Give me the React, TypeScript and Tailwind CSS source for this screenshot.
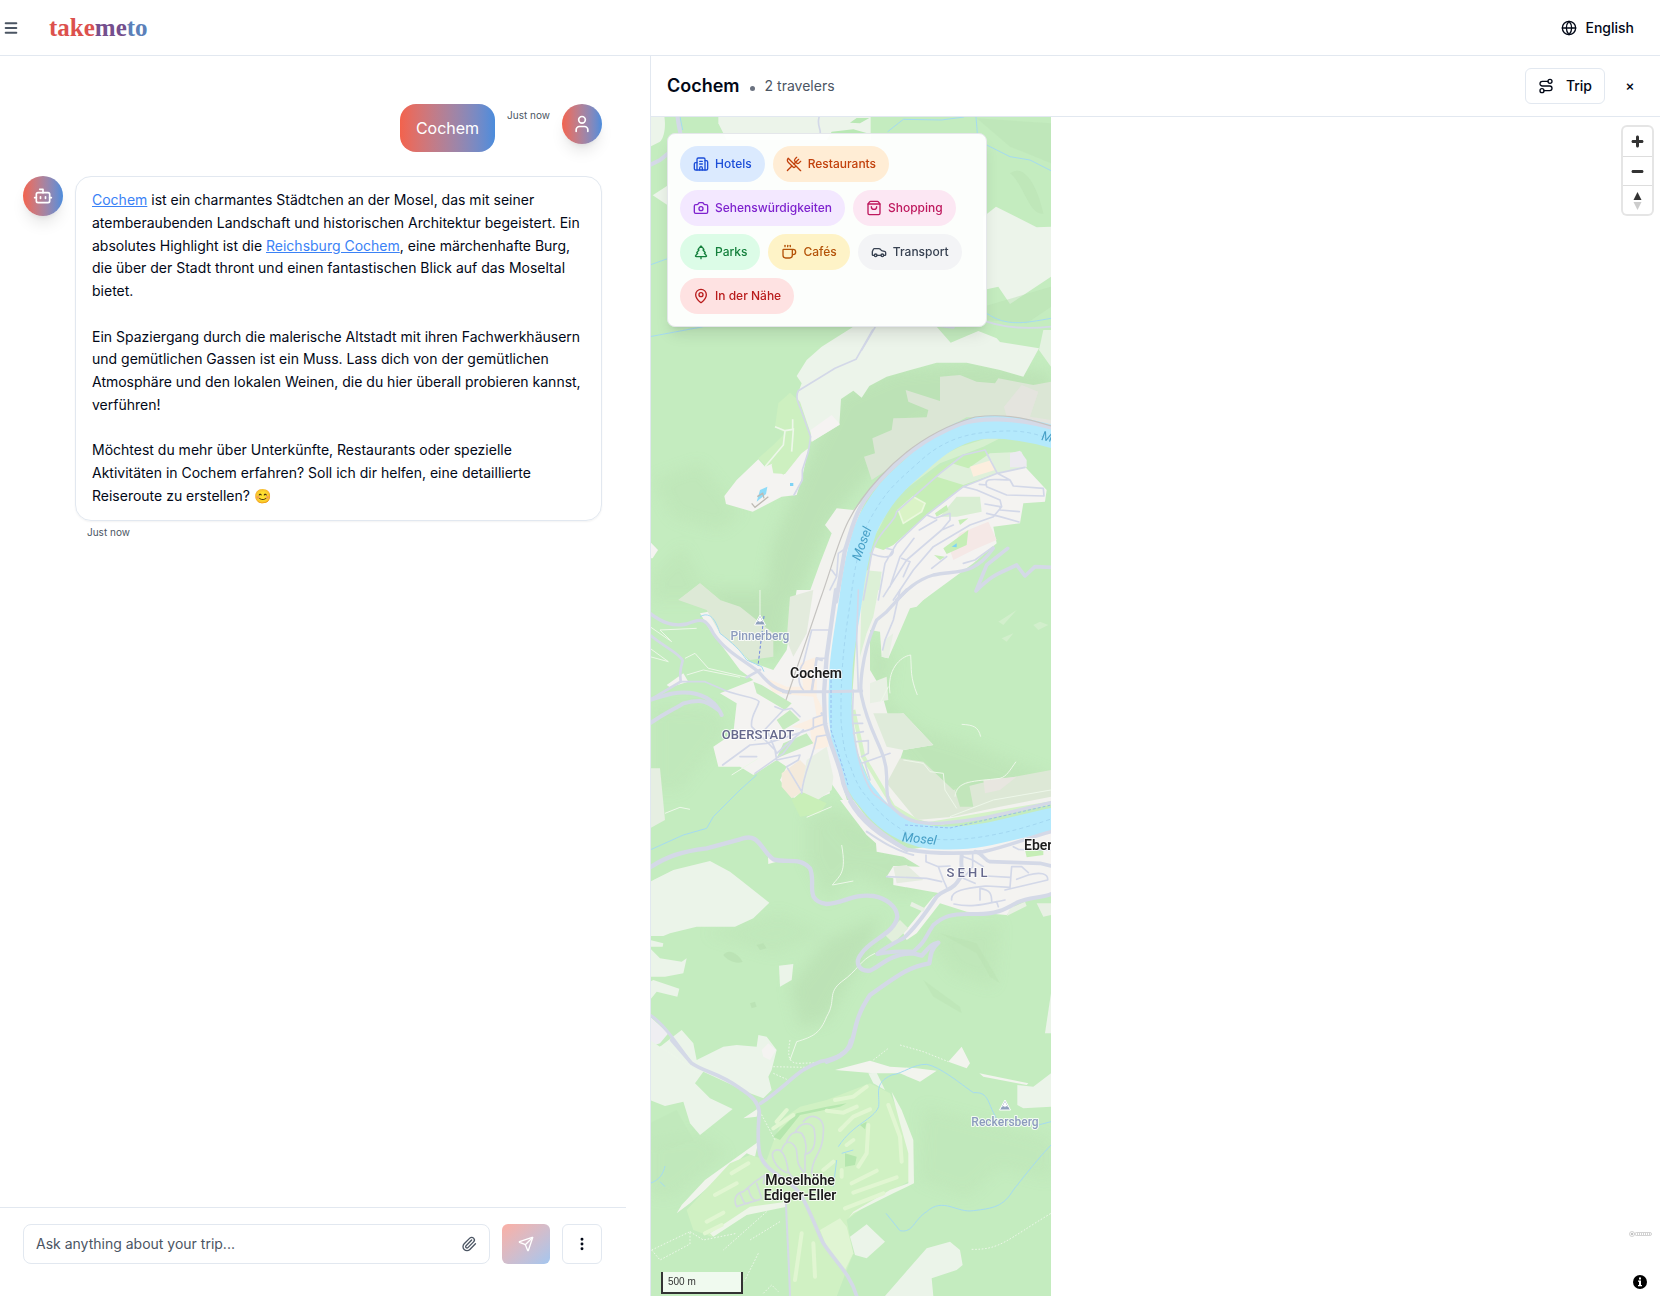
import type { ReactNode } from "react";
import {
  Bot,
  Building2,
  Camera,
  Car,
  Coffee,
  EllipsisVertical,
  Globe,
  MapPin,
  Menu,
  Paperclip,
  Route,
  Send,
  ShoppingBag,
  TreePine,
  User,
  UtensilsCrossed,
  type LucideIcon,
} from "lucide-react";

function Header() {
  return (
    <header className="flex h-14 shrink-0 items-center justify-between border-b border-slate-200 pl-[3px] pr-[26px]">
      <div className="flex items-center gap-[30px]">
        <button type="button" aria-label="Menu" className="text-[#4b5563]">
          <Menu className="size-4" strokeWidth={3} />
        </button>
        <a
          href="#"
          className="font-['Liberation_Serif',serif] text-[25px] leading-7 font-bold"
        >
          <span className="text-[#dc514d]">take</span>
          <span className="text-[#754f8d]">me</span>
          <span className="text-[#5b80b9]">to</span>
        </a>
      </div>
      <button type="button" className="flex items-center gap-2 text-sm font-medium">
        <Globe className="size-4" />
        English
      </button>
    </header>
  );
}

function Avatar({ icon: Icon }: { icon: LucideIcon }) {
  return (
    <div className="flex size-10 shrink-0 items-center justify-center rounded-full bg-linear-to-r from-[#f3624c] to-[#4a8cdc] text-white shadow-lg">
      <Icon className="size-5" />
    </div>
  );
}

function PlaceLink({ children }: { children: ReactNode }) {
  return (
    <a href="#" className="text-[#3b82f6] underline">
      {children}
    </a>
  );
}

function Conversation() {
  return (
    <div className="flex flex-1 flex-col gap-6 overflow-hidden pt-12 pr-12 pl-[23px]">
      <div className="flex items-start justify-end gap-3">
        <p className="rounded-2xl bg-linear-to-r from-[#f3624c] to-[#4a8cdc] px-4 py-3 text-base text-white">
          Cochem
        </p>
        <span className="pt-1 text-[10px] leading-[15px] text-[#4b5563]">Just now</span>
        <Avatar icon={User} />
      </div>
      <div className="flex items-start gap-3">
        <Avatar icon={Bot} />
        <div className="flex-1">
          <div className="rounded-2xl border border-slate-200 px-4 py-3 text-sm leading-relaxed shadow-xs">
            <p>
              <PlaceLink>Cochem</PlaceLink> ist ein charmantes Städtchen an der Mosel, das mit
              seiner atemberaubenden Landschaft und historischen Architektur begeistert. Ein
              absolutes Highlight ist die <PlaceLink>Reichsburg Cochem</PlaceLink>, eine
              märchenhafte Burg, die über der Stadt thront und einen fantastischen Blick auf das
              Moseltal bietet.
            </p>
            <br />
            <p>
              Ein Spaziergang durch die malerische Altstadt mit ihren Fachwerkhäusern und
              gemütlichen Gassen ist ein Muss. Lass dich von der gemütlichen Atmosphäre und den
              lokalen Weinen, die du hier überall probieren kannst, verführen!
            </p>
            <br />
            <p>
              Möchtest du mehr über Unterkünfte, Restaurants oder spezielle Aktivitäten in Cochem
              erfahren? Soll ich dir helfen, eine detaillierte Reiseroute zu erstellen? 😊
            </p>
          </div>
          <p className="mt-1 px-3 text-[10px] leading-[15px] text-[#4b5563]">Just now</p>
        </div>
      </div>
    </div>
  );
}

function Composer() {
  return (
    <form className="mr-6 flex shrink-0 items-center gap-3 border-t border-slate-200 pt-4 pr-6 pb-8 pl-[23px]">
      <div className="flex h-10 min-w-0 flex-1 items-center rounded-lg border border-slate-200 px-3">
        <input
          type="text"
          aria-label="Message"
          placeholder="Ask anything about your trip..."
          className="min-w-0 flex-1 text-sm outline-none placeholder:text-[#4b5563]"
        />
        <button type="button" aria-label="Attach a file" className="text-[#4b5563]">
          <Paperclip className="size-4" />
        </button>
      </div>
      <button
        type="button"
        aria-label="Send"
        className="flex h-10 w-12 items-center justify-center rounded-md bg-linear-to-br from-[#fbafa4] to-[#a3c6ef] text-white"
      >
        <Send className="size-4" />
      </button>
      <button
        type="button"
        aria-label="More options"
        className="flex size-10 items-center justify-center rounded-md border border-slate-200"
      >
        <EllipsisVertical className="size-4" strokeWidth={2.4} />
      </button>
    </form>
  );
}

const categories: { label: string; icon: LucideIcon; tone: string }[] = [
  { label: "Hotels", icon: Building2, tone: "bg-[#dbeafe] text-[#1d4ed8]" },
  { label: "Restaurants", icon: UtensilsCrossed, tone: "bg-[#ffedd5] text-[#c2410c]" },
  { label: "Sehenswürdigkeiten", icon: Camera, tone: "bg-[#f3e8ff] text-[#7e22ce]" },
  { label: "Shopping", icon: ShoppingBag, tone: "bg-[#fce7f3] text-[#be185d]" },
  { label: "Parks", icon: TreePine, tone: "bg-[#dcfce7] text-[#15803d]" },
  { label: "Cafés", icon: Coffee, tone: "bg-[#fef3c7] text-[#b45309]" },
  { label: "Transport", icon: Car, tone: "bg-[#f3f4f6] text-[#374151]" },
  { label: "In der Nähe", icon: MapPin, tone: "bg-[#fee2e2] text-[#b91c1c]" },
];

function CategoryPanel() {
  return (
    <div className="absolute top-4 left-4 flex w-80 flex-wrap gap-2 rounded-lg border border-gray-200 bg-white/95 p-3 shadow-lg">
      {categories.map(({ label, icon: Icon, tone }) => (
        <button
          key={label}
          type="button"
          className={`flex h-9 items-center gap-1.5 rounded-full border border-transparent bg-clip-border px-3 text-xs font-medium ${tone}`}
        >
          <Icon className="size-4" />
          {label}
        </button>
      ))}
    </div>
  );
}

function Peak({ x, y }: { x: number; y: number }) {
  return (
    <g transform={`translate(${x} ${y})`}>
      <path d="M0 -5L5.500 5H-5.500Z" fill="#8fa1bd" stroke="#fff" strokeWidth="1" />
      <path d="M0 -3.500L3 2L1 1L0 2.500L-1 1L-3 2Z" fill="#fff" />
    </g>
  );
}

/* Terrain map of the Mosel bend. Each sheet group holds one strip, drawn at three units per pixel. */
function TerrainMap() {
  return (
    <svg
      role="img"
      aria-label="Map of Cochem"
      viewBox="651 117 400 1179"
      preserveAspectRatio="xMidYMin slice"
      className="h-full w-[400px]"
    >
      <defs>
        <filter id="soft" x="-20%" y="-20%" width="140%" height="140%">
          <feGaussianBlur stdDeviation="7" />
        </filter>
      </defs>
      <rect x="651" y="117" width="400" height="1179" fill="#c4ecbf" />

      {/* Relief shading */}
      <g fill="#b9dfb2" filter="url(#soft)" opacity="0.7">
        <g transform="translate(640 330) scale(0.33333)">
          <path d="M600 190L760 120L1000 100L1233 130V250L1000 240L850 290L700 420L580 560L520 700L470 810H370L400 640L450 520L520 350Z" />
          <path d="M40 450L180 400L300 550L240 600L100 560Z" opacity="0.500" />
          <path d="M40 740L130 650L180 760L340 810H40Z" opacity="0.500" />
        </g>
        <g transform="translate(640 590) scale(0.33333)">
          <path d="M220 0H460L420 200L340 190L260 120Z" />
          <path d="M680 140L760 200L740 330L840 420L950 450L1233 560V620L900 640L780 500L690 330Z" opacity="0.700" />
          <path d="M40 350L220 360L260 420L120 600H40Z" opacity="0.400" />
          <path d="M520 640L620 660L780 780L640 780Z" opacity="0.500" />
        </g>
        <g transform="translate(640 800) scale(0.33333)">
          <path d="M500 40L640 60L820 170L860 260L780 280L640 220L560 300L500 180Z" opacity="0.700" />
          <path d="M450 560L560 420L720 350L700 410L640 520L560 660L480 680Z" />
          <path d="M860 400L1080 370L1060 560L940 520Z" opacity="0.500" />
          <path d="M200 400L420 340L560 400L400 460Z" opacity="0.400" />
        </g>
        <g transform="translate(640 1040) scale(0.33333)">
          <path d="M850 200L1233 300V420L1080 380L980 470L840 420Z" opacity="0.400" />
          <path d="M30 300L180 280L260 340L100 470H30Z" opacity="0.400" />
        </g>
      </g>

      {/* Fields and built-up land */}
      <g transform="translate(640 40) scale(0.33333)">
        <path d="M30 225H72C78 250 75 290 60 305L30 320Z" fill="#ecf4ea" />
        <path d="M235 190H692V300H260L235 250Z" fill="#ecf4ea" />
        <path d="M575 275L640 268L690 282V300H560ZM630 248L650 234H688L660 250Z" fill="#b9e8b4" />
        <path d="M38 466L90 432V500Z" fill="#ecf4ea" />
        <path d="M1030 530L1068 500L1190 562L1233 560V710L1110 792L1075 740L1030 750Z" fill="#ecf4ea" />
        <path d="M1110 400C1150 370 1190 430 1210 520C1170 530 1150 430 1110 400Z" fill="#b9e2b3" opacity="0.500" />
        <path d="M1010 235L1233 250V370L1110 320Z" fill="#b9e2b3" opacity="0.400" />
        <path d="M1030 800L1233 740V800L1160 850L1040 840Z" fill="#b9e2b3" opacity="0.500" />
      </g>
      <g transform="translate(640 330) scale(0.33333)">
        <path d="M470 138L500 90L545 50L640 -10H890L932 38L1015 3L1070 25L1080 36L1197 55L1150 140L1080 120L980 98H890L740 140L688 168L665 203L640 182L603 207L598 285L515 335L510 310L470 200L485 160Z" fill="#ecf4ea" />
        <path d="M575 255L600 283L515 335L512 300Z" fill="#f5f3f2" />
        <path d="M1197 60L1233 110V0H1210Z" fill="#ecf4ea" opacity="0.800" />
        <path d="M797 180L900 213V140L960 135L1010 155L1065 160L1075 145L1180 165L1233 155V290L1100 262L980 262L870 320L740 420L695 450L672 380L705 370L697 325L755 300L760 265L860 262L865 240L805 215Z" fill="#dbe6d5" />
        <path d="M1092 230L1145 165L1195 185L1170 260L1233 270V290L1100 262Z" fill="#e4e4de" />
        <path d="M405 290L415 220L450 188L480 215L512 310L508 355L430 435L395 425L355 385L400 345L435 310Z" fill="#cdf0c0" />
        <path d="M355 388L375 410L400 400L430 435L450 395L505 355L487 440L470 495L425 500L338 545L258 522L253 498L290 450Z" fill="#f4f3f1" />
        <path d="M395 405L430 320L460 300L462 370L500 350L435 432L400 430Z" fill="#cdf0c0" />
        <path d="M360 480L382 470L378 492L350 515Z" fill="#8fdcf8" />
        <path d="M450 459H460V468H450Z" fill="#7fd3f5" />
        <path d="M335 520L345 532L385 500M352 500L368 490L372 505" stroke="#bdb9b2" strokeWidth="4" fill="none" />
        <path d="M30 635L54 660L38 685H30Z" fill="#f5f3f2" />
        <path d="M555 585L590 535L640 540L680 500L640 600L600 810H500L540 700L575 610Z" fill="#f2f2ee" />
        <path d="M115 810L180 760L240 810Z" fill="#dde9d6" />
        {/* East bank town */}
        <path d="M700 650L760 640L870 540L970 470L1000 440L1070 400L1150 405L1220 480L1215 515L1150 520L1140 580L1060 590L1070 640L1000 700L945 740L850 810H670L690 700Z" fill="#f4f3f1" />
        <path d="M690 640L720 560L780 490L900 400L1030 350L1080 325L1040 325L960 350L860 400L770 490L720 590Z" fill="#d6f0cf" />
        <path d="M700 650L735 570L790 500L900 410L1030 355L1045 365L1070 430L970 470L860 555L760 645L730 660Z" fill="#c6eeb7" />
        <path d="M890 440L935 400L985 415L1050 370L1145 365L1160 410L1070 430L970 465Z" fill="#dff0da" />
        <path d="M990 410L1055 390L1065 420L1000 440Z" fill="#fceede" />
        <path d="M1110 370L1140 362L1160 390V412L1110 412Z" fill="#eceaf0" />
        <path d="M775 540L820 500L855 520L845 545L790 580Z" fill="#daf3c6" stroke="#eaf8dd" strokeWidth="5" />
        <path d="M900 560L950 500L1020 500L1025 545L950 560Z" fill="#d9eed3" />
        <path d="M960 610L1045 575L1070 630L1000 660L940 690L930 660Z" fill="#f5e8e6" />
        <path d="M910 655L985 600L980 645L920 672ZM885 550L920 525L925 540L890 560ZM955 570L985 565L960 585ZM882 675L915 680L900 690Z" fill="#c6eeb7" />
        <path d="M935 650L950 640L950 652Z" fill="#7fd3f5" />
        <path d="M670 720L725 725L715 810H665Z" fill="#dcf0d6" />
      </g>
      <g transform="translate(640 590) scale(0.33333)">
        <path d="M180 70L205 65L235 110L330 215L400 240L440 180L470 0H610L575 200L570 400L600 560L630 660L560 560L570 610L500 640L455 620L420 570L440 530L410 510L340 555L300 530L235 530L220 470L280 430L290 340L240 310L340 270L300 240L210 120Z" fill="#f4f3f1" />
        <path d="M115 30L180 -20L240 30L300 50L400 130L400 200L330 210L240 130L200 60Z" fill="#dde9d6" />
        <path d="M450 20L520 0L500 130L460 200L440 150Z" fill="#e3ebdd" />
        <path d="M480 220L530 200V320L560 380L565 470L520 480L510 420L455 410L530 380L520 320L400 310L370 260L440 290L490 290Z" fill="#fbefe3" />
        <path d="M425 550L480 510L500 530L480 610L455 625L425 590Z" fill="#f4eadb" />
        <path d="M500 510L560 470L580 560L575 600L520 640L485 600Z" fill="#e8f0e4" />
        <path d="M455 630L485 605L560 640L540 670L480 680Z" fill="#c9efb8" />
        <path d="M340 275L365 285L455 340L435 360L350 310ZM410 390L450 360L480 390L430 420ZM430 460L500 430L520 460L410 505Z" fill="#c6ebc0" />
        <path d="M30 535H60L75 690L30 715Z" fill="#e6efe2" />
        <path d="M80 285L130 250L145 275L90 292Z" fill="#f4f3f1" />
        {/* East bank */}
        <path d="M660 0H880L830 50L810 55L745 205L725 200L720 125L690 120L690 240L720 290L745 380L790 370L880 465L790 480L780 510L860 580L940 640L1233 560V640L900 705L760 670L700 600L650 480L635 340Z" fill="#f2f2ee" />
        <path d="M665 0H715L700 80L680 130L660 200Z" fill="#dcf0d6" />
        <path d="M700 370L790 370L880 465L790 480L740 470Z" fill="#dfebda" />
        <path d="M780 505L850 515L940 600L1020 580L1233 540V620L1080 650L940 680L830 690L740 580Z" fill="#dde8d6" />
        <path d="M745 205L725 200L735 150L760 130ZM690 280L740 260L745 330L690 340Z" fill="#e8f0e4" />
        <path d="M640 360L670 500L760 650L850 705L1233 640" stroke="#d5f2c8" strokeWidth="12" fill="none" />
        <path d="M1060 85L1075 95L1130 60L1090 105ZM1180 105L1200 95L1225 105L1195 120ZM1085 145L1120 130L1100 155Z" fill="#d2efcc" />
        <path d="M1030 570L1130 560L1080 600L1035 610Z" fill="#e8e6e0" />
        <path d="M945 600L985 570L1000 650H960Z" fill="#c2e6bb" />
      </g>
      <g transform="translate(640 800) scale(0.33333)">
        <path d="M30 245L100 210L210 183L270 215L388 308L340 355L285 380L170 380L90 400L70 408H30Z" fill="#ebf4e9" />
        <path d="M30 420L70 430L68 440H30ZM30 445L60 475L125 485L140 475L130 520L75 530H30ZM40 540L118 566L112 590L50 575L30 600V545Z" fill="#ebf4e9" />
        <path d="M417 497L460 492L455 540L420 560Z" fill="#ebf4e9" />
        <path d="M384 170L410 185L385 192Z" fill="#f4f3f1" />
        <path d="M600 0H640L700 80L800 150L1233 80V280L1130 310L1100 345L980 335L900 310L830 400L800 420L790 400L880 290L900 280L760 255V235L740 230L760 198L840 200L790 170L710 155L708 130L680 105Z" fill="#f4f3f1" />
        <path d="M760 200L800 195L850 240L770 250Z" fill="#e5ece0" />
        <path d="M1155 150L1210 140V165L1160 172Z" fill="#c6eeb7" />
        <path d="M780 360L805 385L760 430L735 405Z" fill="#e2efdc" />
        <path d="M815 305L855 325L850 335L810 318Z" fill="#e8f0e4" />
        <path d="M1190 310H1233V345L1210 350ZM1110 325L1155 305L1160 318L1100 348Z" fill="#e8f0e4" />
        <path d="M1233 580L1215 700H1233Z" fill="#ebf4e9" />
        <path d="M30 650L85 700L60 730L30 740Z" fill="#efeef2" />
        <path d="M250 465C270 440 300 470 308 485C290 495 260 480 250 465ZM330 610L345 605L350 620L335 625ZM350 435L370 430L380 445L360 450Z" fill="#b6ddaf" opacity="0.600" />
        <path d="M900 400L1010 430L1080 550L1050 530L1010 460ZM850 540L960 620L965 640L880 590Z" fill="#b9e0b2" opacity="0.400" />
      </g>
      <g transform="translate(640 1040) scale(0.33333)">
        <path d="M30 0L60 20L125 -30L160 10L170 60L250 20L290 15L350 20L355 -15L380 -10L410 30L395 90L385 110L395 150L370 175L330 160L190 95L165 130L210 175L278 207L180 285L150 250L130 185L75 198L30 180Z" fill="#ebf4e9" />
        <path d="M365 30L385 10L408 30L390 60L370 50Z" fill="#f4f3f1" />
        <path d="M355 305L345 350L320 340L150 490L110 520L125 495L195 420ZM310 235L355 205L350 230Z" fill="#f0f4ec" />
        <path d="M140 510L270 370L330 345L380 360L400 305L430 235L480 200L560 180L690 130L750 160L790 250L810 330L815 420L700 480L620 540L640 640L620 690L590 770H450L440 500L320 510L215 590L160 570Z" fill="#d0f1c3" />
        <path d="M585 90L690 62L750 80L830 85L890 92L840 125L780 100L700 100ZM1018 100L1165 130L1160 135L1030 110ZM925 65L965 20L990 70L980 85Z" fill="#f2f4ee" />
        <path d="M1132 135L1180 140L1233 100V200L1150 205L1132 195Z" fill="#ebf4e9" />
        <path d="M685 100L710 98L735 150L700 130Z" fill="#ebf4e9" />
        <path d="M755 155L785 210L820 300L822 430L760 460L640 520L625 535L640 515L750 450L805 430L805 340L780 250Z" fill="#edf5e8" />
        <path d="M440 485L330 500L210 580L220 590L320 525L440 500Z" fill="#edf5e8" />
        <path d="M540 570L600 535L620 560L640 640L615 690L560 620Z" fill="#e0f5d3" />
        <path d="M630 590L680 553L735 605L680 655L645 645Z" fill="#ebf4e9" />
        <path d="M735 768L860 625L930 605L960 630L968 675L950 690L875 715L880 768Z" fill="#ebf4e9" />
        <path d="M615 340L650 350L645 375L615 380ZM660 255L680 245L675 268ZM400 290L470 220L560 200L620 190L600 200L480 225L420 300Z" fill="#b5e6ae" />
        <g stroke="#e1f6d2" strokeWidth="12" strokeLinecap="round" fill="none">
          <path d="M400 265L460 225M410 245L440 210M585 180L640 170L680 140M560 212L610 218L650 200M600 270L640 230L690 208M685 255L680 340L655 380M635 430L710 392M640 458L770 412M615 505L730 460M745 195L780 290L785 365M550 390L580 365M275 400L325 370M225 465L290 430M200 545L250 518M195 580L245 555M485 580L465 720M520 610L525 710M605 390V410M620 315L640 300" />
        </g>
        <path d="M30 250L110 210L160 300L80 330H30Z" fill="#bee5b8" opacity="0.400" />
      </g>

      {/* River */}
      <g fill="none" strokeLinejoin="round">
        <path
          d="M1054 437C1030 430 1010 427 990 427C960 428 938 444 918 463C900 479 890 488 882 500C870 518 866 526 863 537C856 560 853 580 851 597C847 625 842 650 841 670C840 700 839 710 841 723C843 745 845 755 850 765C855 780 860 790 867 797C878 812 890 824 910 832C925 838 935 838 950 838C985 838 1010 828 1054 819"
          stroke="#b4e9fc"
          strokeWidth="23"
        />
        <path
          d="M1051 440C1030 430 1010 430 990 432C960 434 938 444 918 463C900 479 890 488 882 500C870 518 866 526 863 537C856 560 853 580 851 597C847 625 842 650 841 700V720C843 745 845 755 850 765C855 780 860 790 867 797C878 812 890 824 910 834C935 844 985 842 1051 819"
          stroke="#97cbea"
          strokeWidth="0.600"
          strokeDasharray="4 3"
        />
      </g>

      {/* Streams */}
      <g fill="none" stroke="#a5daf0" strokeWidth="3">
        <g transform="translate(640 40) scale(0.33333)">
          <path d="M743 275L790 238L905 240L972 231M1008 230L1012 280M1040 315L1110 350L1170 360L1233 392M30 675L85 655M30 890L190 860M1040 820C1100 860 1150 850 1233 835M120 230L128 270" />
        </g>
        <g transform="translate(640 590) scale(0.33333)">
          <path d="M180 80C215 60 230 100 240 130C280 160 300 180 320 210L365 230L372 245M350 555L300 600L220 680L200 715L130 735L30 780" />
        </g>
        <g transform="translate(640 1040) scale(0.33333)">
          <path d="M755 105C790 100 820 72 860 73C900 80 960 130 1000 158C1050 155 1040 190 1075 245M755 105C700 130 720 160 716 200C700 240 640 250 595 320M1195 255L1233 245M605 340L640 330M590 360L580 440M30 430C60 420 70 400 75 378M60 425L75 440M738 520L780 572C820 580 820 540 860 515C910 470 950 520 1000 512C1060 505 1090 500 1120 450C1160 400 1190 360 1233 315" />
        </g>
      </g>

      {/* Footpaths */}
      <g fill="none" stroke="#edf7e9" strokeWidth="3">
        <g transform="translate(640 330) scale(0.33333)">
          <path d="M405 290L435 302L430 345L375 410M435 302L460 298L455 365M458 268V300" strokeWidth="5" />
        </g>
        <g transform="translate(640 590) scale(0.33333)">
          <path d="M30 110L95 155L60 120L170 115M30 175L85 215L30 200M135 205L165 190L205 235L320 262M140 255L190 240L300 262M360 0V75M750 310C740 240 780 200 812 195C815 240 810 260 832 315M965 403C1000 405 1015 410 1022 440M790 510L850 520L870 545L910 550L915 600L950 655M945 620C950 570 1000 575 1080 565C1100 560 1110 540 1128 515M930 680L1060 630L1233 600M275 555L355 505M500 682L575 650M75 670L120 652L150 658M720 340L745 290" />
        </g>
        <g transform="translate(640 800) scale(0.33333)">
          <path d="M605 135C620 220 600 225 577 255L640 243M705 460C660 480 655 510 605 545C560 580 590 600 560 650C540 700 520 710 470 725L450 780" />
        </g>
        <g transform="translate(640 1040) scale(0.33333)">
          <path d="M450 0C440 60 450 70 480 70L530 68M390 80L500 82M400 100L440 118M700 60L745 25M995 628C1080 630 1100 600 1233 520M360 215L405 300M35 630L150 575V612L60 660ZM150 575L190 600L290 580M380 515L250 630M420 545L330 600M355 640L310 730M370 760L395 735L415 755M60 20L180 100" strokeDasharray="5 5" />
          <path d="M780 15L850 35L925 65" strokeDasharray="5 5" />
        </g>
      </g>

      {/* Minor streets */}
      <g fill="none" stroke="#d3d8e8" strokeWidth="5" strokeLinecap="round" strokeLinejoin="round">
        <g transform="translate(640 40) scale(0.33333)">
          <path d="M537 232C530 260 545 270 540 280M705 862L665 930" />
        </g>
        <g transform="translate(640 330) scale(0.33333)">
          <path d="M698 0L648 88L585 115L475 182C465 200 475 220 485 245L512 320L505 365L487 420V450L462 495" />
          <path d="M765 560L770 545L900 430L970 375L1035 360L1072 430L970 470L860 555L770 640L735 700L715 810M1155 412L1072 430L1110 450L1120 468L1210 475L1212 498L1100 495L1040 470C1030 440 1060 450 1110 450M1018 463L1040 465M970 470L1010 480L1080 510L1085 530L1060 560L990 585L880 650L820 720L760 810M1035 522L1080 530L1080 540L1138 545M1040 550L1080 560L1137 576M860 555L885 565L930 550L930 570L905 600L940 585M838 600L890 570M905 600L800 690L730 800M822 625L780 680L750 770M785 685L810 695L790 740M765 560C740 600 700 620 690 700L670 810M690 670C740 690 760 680 760 660L740 655M610 660L595 670L590 740L570 780M575 720L590 740M875 715L920 680M970 700L1005 690L1060 650" />
        </g>
        <g transform="translate(640 590) scale(0.33333)">
          <path d="M515 120H565M515 120L490 220C475 240 470 280 490 300M530 205H560M530 205L515 305M120 275H195L240 295C290 320 350 320 357 335C350 360 330 380 335 410L405 480L410 510M405 350L430 360L345 450M430 360L455 355L480 380M248 525L330 465L380 460L520 415V385L548 375M385 430L410 490L490 420M345 550L430 490L475 430M300 500H350M515 415L560 400M560 435L530 440C520 500 490 550 485 610M410 510L480 495L475 510L440 530L485 605M637 375H660M637 400H668M640 430L670 425M650 455L685 452M665 500L685 490V455M665 520L750 490M675 520L690 570M640 300L637 380C640 440 660 560 700 610L750 650M655 0L650 150L655 300M780 0L760 90L735 150L728 180" />
        </g>
        <g transform="translate(640 800) scale(0.33333)">
          <path d="M858 165V185L895 200L910 240L920 262M740 230L860 235L905 245M895 200L930 198M970 170L998 180L1030 200M998 160V200L970 235L1005 250M935 300C930 270 980 265 1040 258L1110 262L1115 200H1145L1165 218M1020 265V300M1020 265C1050 270 1055 280 1055 305M942 312C1000 325 1040 310 1095 300M1070 305L1075 320M1040 228L1110 232M1095 270L1223 240C1225 220 1200 215 1165 225L1130 238M1120 140L1135 148L1233 150" />
        </g>
        <g transform="translate(640 1040) scale(0.33333)" stroke="#d4dae2">
          <path d="M440 398C405 385 390 345 402 333C425 320 440 350 445 398M425 330C435 300 455 300 468 325C475 345 465 370 490 395M440 305C450 280 465 270 485 280C500 300 500 330 495 345V395M465 278C480 245 510 245 522 265C530 310 520 335 500 342M490 245C510 215 555 230 550 275C550 340 515 350 515 400M290 500C280 480 285 460 310 455L345 425L375 405L370 430M300 460C310 480 310 495 325 490M325 445C330 470 340 480 345 480M350 430L365 475M290 500L320 490L360 478M490 400L515 430M445 395L470 430" />
        </g>
      </g>

      {/* Main roads */}
      <g fill="none" stroke="#d4d9e7" strokeLinecap="round" strokeLinejoin="round">
        <g transform="translate(640 40) scale(0.33333)" strokeWidth="12">
          <path d="M112 225C115 260 120 270 122 285M30 375L60 360L85 340" />
          <path d="M1040 845C1100 865 1160 868 1233 860" strokeWidth="5" />
          <path d="M880 855L940 862" strokeWidth="8" />
        </g>
        <g transform="translate(640 330) scale(0.33333)">
          <path d="M1233 292C1120 262 1020 262 960 282C840 330 780 390 740 430C640 530 640 590 615 660L588 815" strokeWidth="13" />
          <path d="M1103 655L1040 705L1008 783C1060 730 1080 730 1130 705L1155 738L1185 710L1233 712" strokeWidth="11" />
          <path d="M1060 655C1000 740 950 720 880 735C830 750 800 780 770 810" strokeWidth="10" />
        </g>
        <g transform="translate(640 590) scale(0.33333)">
          <path d="M588 0L560 200L552 310L555 400C570 470 600 520 610 580C630 650 700 720 800 780" strokeWidth="13" />
          <path d="M800 0L740 65L710 90C660 200 660 300 665 320C690 440 740 480 740 560C740 600 740 640 760 655C810 705 860 700 900 700C1040 690 1130 660 1233 638" strokeWidth="10" />
          <path d="M430 305H555L665 303" strokeWidth="9" />
          <path d="M30 70C70 100 100 110 140 102C190 80 200 90 220 130C260 190 330 220 360 250C390 285 410 300 450 308" strokeWidth="10" />
          <path d="M30 135C70 170 120 190 128 212C120 240 120 250 122 275L30 330M360 240L320 262" strokeWidth="8" />
          <path d="M30 330C90 310 110 305 150 308C200 315 230 340 245 375M30 400C90 360 100 360 130 340C170 330 190 325 235 360" strokeWidth="12" />
          <path d="M545 210L530 205L515 305M545 370L555 380" strokeWidth="8" />
        </g>
        <g transform="translate(640 800) scale(0.33333)">
          <path d="M30 202C80 170 120 155 200 145L300 118C360 95 360 150 400 178C440 190 480 170 510 205C530 250 490 300 560 312C610 310 640 280 700 288C740 295 770 320 772 350C765 400 690 420 665 460C640 490 660 515 690 512C720 500 750 460 820 460L845 467C870 440 870 435 895 428C870 450 872 470 868 490C810 500 780 520 690 585C640 660 650 690 630 740C610 765 590 775 560 785" strokeWidth="13" />
          <path d="M965 165C965 180 960 200 970 215C940 280 920 260 890 290C850 350 820 390 790 415C750 435 720 455 712 462C760 450 800 455 820 455C860 420 850 420 880 375C910 350 930 340 1000 342C1070 345 1100 325 1130 308C1170 290 1200 295 1233 282" strokeWidth="12" />
          <path d="M630 5C660 60 720 110 800 148C900 165 980 160 1030 155C1100 140 1160 115 1233 95M1005 155C1030 160 1030 180 1050 185L1200 190L1233 198" strokeWidth="11" />
          <path d="M680 95C720 120 760 150 820 165" strokeWidth="6" />
          <path d="M30 645C70 670 110 730 150 785" strokeWidth="9" />
        </g>
        <g transform="translate(640 1040) scale(0.33333)">
          <path d="M95 0L155 70C200 100 230 95 300 145C340 170 355 190 358 215C355 260 350 300 360 345C380 400 440 410 480 460C510 510 530 570 550 610C590 670 630 700 650 768" strokeWidth="11" />
          <path d="M632 0C625 40 590 55 540 65C470 90 450 130 362 190" strokeWidth="11" />
          <path d="M438 490C440 560 445 620 450 768" strokeWidth="6" />
        </g>
      </g>

      {/* Railway and ferry lines */}
      <g fill="none">
        <path d="M1051 426C1020 416 1000 414 975 417C930 430 900 455 880 477C840 520 840 545 820 600L786 700" stroke="#c5c3c0" strokeWidth="1.200" />
        <path d="M764 616L758 666" stroke="#6f86e0" strokeWidth="1" strokeDasharray="3 2" />
        <path d="M831 680V730L838 752L848 785M905 825L950 828L1051 805" stroke="#8fb2ef" strokeWidth="0.800" strokeDasharray="3 2" />
      </g>

      {/* Labels */}
      <Peak x={760} y={620} />
      <Peak x={1005} y={1105} />
      <g
        textAnchor="middle"
        className="font-['Roboto',sans-serif]"
        stroke="#fff"
        strokeWidth="2"
        strokeOpacity="0.8"
        paintOrder="stroke"
        strokeLinejoin="round"
      >
        <g fontSize="12" fontWeight="500" fill="#8c9bbd">
          <text x="760" y="640">Pinnerberg</text>
          <text x="1005" y="1126">Reckersberg</text>
        </g>
        <g fontSize="14" fontWeight="600" fill="#1c1c1c">
          <text x="816" y="678">Cochem</text>
          <text x="1024" y="850" textAnchor="start">Eber</text>
          <text x="800" y="1185">Moselhöhe</text>
          <text x="800" y="1200">Ediger-Eller</text>
        </g>
        <g fontSize="13" fontWeight="500" fill="#65688c">
          <text x="758" y="739">OBERSTADT</text>
          <text x="967" y="877">S E H L</text>
        </g>
      </g>
      <g fontSize="13" fontStyle="italic" fill="#469fc6" textAnchor="middle" className="font-['Roboto',sans-serif]">
        <text transform="translate(866 545) rotate(-70)">Mosel</text>
        <text transform="translate(919 843) rotate(6)">Mosel</text>
        <text transform="translate(1041 440) rotate(10)" textAnchor="start">M</text>
      </g>
    </svg>
  );
}

function MapControls() {
  return (
    <>
      <div className="absolute top-2.5 right-2 w-[29px] rounded bg-white text-[#333] ring-2 ring-black/10">
        <button type="button" aria-label="Zoom in" className="block h-[29px] w-full">
          <svg viewBox="0 0 29 29" className="size-[29px]" fill="currentColor">
            <path d="M14.500 8.500c-.8 0-1.500.7-1.500 1.500v3h-3c-.8 0-1.500.7-1.500 1.500S9.200 16 10 16h3v3c0 .8.7 1.500 1.500 1.500S16 19.800 16 19v-3h3c.8 0 1.500-.7 1.500-1.500S19.800 13 19 13h-3v-3c0-.8-.7-1.500-1.500-1.500z" />
          </svg>
        </button>
        <button type="button" aria-label="Zoom out" className="block h-[29px] w-full border-t border-[#ddd]">
          <svg viewBox="0 0 29 29" className="size-[29px]" fill="currentColor">
            <path d="M10 13c-.8 0-1.500.7-1.500 1.500S9.200 16 10 16h9c.8 0 1.500-.7 1.500-1.500S19.800 13 19 13h-9z" />
          </svg>
        </button>
        <button type="button" aria-label="Reset bearing" className="block h-[29px] w-full border-t border-[#ddd]">
          <svg viewBox="0 0 29 29" className="size-[29px]" fill="currentColor">
            <path d="M10.500 14l4-8 4 8h-8z" />
            <path d="M10.500 16l4 8 4-8h-8z" fill="#ccc" />
          </svg>
        </button>
      </div>
      <div className="absolute bottom-0.5 left-2.5 h-[22px] w-[82px] border-2 border-t-0 border-[#333] bg-white/75 px-[5px] font-['Liberation_Sans',sans-serif] text-[10px] leading-5 text-[#333]">
        500 m
      </div>
      <svg viewBox="0 0 23 6" className="absolute right-2 bottom-[59px] h-1.5 w-[23px]" fill="#fff" stroke="#b5b5b5" strokeWidth="0.600">
        <circle cx="3" cy="3" r="2.500" />
        <circle cx="3" cy="3" r="0.800" fill="#999" />
        <rect x="6" y="1.500" width="16.500" height="3" rx="1.500" />
        <path d="M8 3H21" stroke="#c4c4c4" strokeWidth="1.500" strokeDasharray="1 1" />
      </svg>
      <button type="button" aria-label="Map attribution" className="absolute right-[13px] bottom-[7px] size-3.5">
        <svg viewBox="0 0 14 14" className="size-full">
          <circle cx="7" cy="7" r="7" />
          <path d="M6 2.500H8V4.500H6ZM5 5.500H8V10H9V11.200H5V10H6V6.700H5Z" fill="#fff" />
        </svg>
      </button>
    </>
  );
}

function TripPanel() {
  return (
    <section className="flex min-h-0 flex-col border-l border-slate-200">
      <div className="flex h-[61px] shrink-0 items-center justify-between border-b border-slate-200 pr-[17px] pl-4">
        <div className="flex items-center gap-2.5">
          <h1 className="text-lg font-semibold">Cochem</h1>
          <span className="mt-1 size-[5px] rounded-full bg-[#6b7280]" />
          <span className="text-sm text-[#4b5563]">2 travelers</span>
        </div>
        <div className="flex items-center gap-2">
          <button
            type="button"
            className="flex h-9 items-center gap-3 rounded-md border border-slate-200 px-3 text-sm font-medium"
          >
            <Route className="size-4" />
            Trip
          </button>
          <button type="button" aria-label="Close" className="w-[30px] pl-1 text-sm font-medium">
            ×
          </button>
        </div>
      </div>
      <div className="relative min-h-0 flex-1 overflow-hidden">
        <TerrainMap />
        <CategoryPanel />
        <MapControls />
      </div>
    </section>
  );
}

export default function App() {
  return (
    <div className="flex h-screen flex-col bg-white font-['Inter',sans-serif] text-[#020817]">
      <Header />
      <main className="grid min-h-0 flex-1 grid-cols-[65fr_101fr]">
        <section className="flex min-h-0 flex-col">
          <Conversation />
          <Composer />
        </section>
        <TripPanel />
      </main>
    </div>
  );
}
